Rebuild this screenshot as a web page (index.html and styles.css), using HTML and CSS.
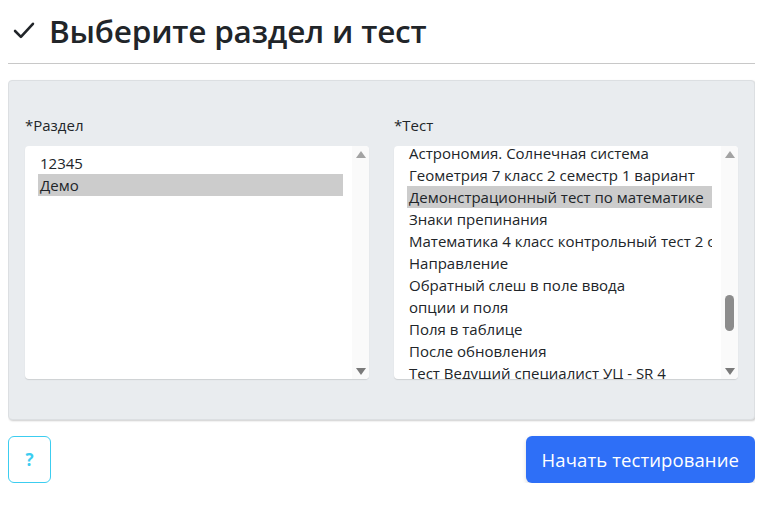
FILE: index.html
```html
<!DOCTYPE html>
<html lang="ru">
<head>
  <meta charset="UTF-8" />
  <meta name="viewport" content="width=device-width, initial-scale=1.0"/>
  <title>Выберите раздел и тест</title>
  <link rel="stylesheet" href="styles.css">
</head>
<body>
  <h2 class="page-title">
    <svg class="check" width="26" height="26" viewBox="0 0 16 16"><path d="M2.5 8.6l3.6 3.6 7.4-8" fill="none" stroke="#212529" stroke-width="1.6" stroke-linecap="round" stroke-linejoin="round"/></svg>
    Выберите раздел и тест
  </h2>
  <hr class="divider">

  <div class="panel">
    <div class="field">
      <label class="field-label">*Раздел</label>
      <div class="listbox">
        <ul class="options">
          <li>12345</li>
          <li class="selected">Демо</li>
        </ul>
        <div class="scrollbar">
          <span class="arrow up"></span>
          <span class="track"></span>
          <span class="arrow down"></span>
        </div>
      </div>
    </div>
    <div class="field">
      <label class="field-label">*Тест</label>
      <div class="listbox">
        <ul class="options scrolled">
          <li>Астрономия. Солнечная система</li>
          <li>Геометрия 7 класс 2 семестр 1 вариант</li>
          <li class="selected">Демонстрационный тест по математике</li>
          <li>Знаки препинания</li>
          <li>Математика 4 класс контрольный тест 2 семестр</li>
          <li>Направление</li>
          <li>Обратный слеш в поле ввода</li>
          <li>опции и поля</li>
          <li>Поля в таблице</li>
          <li>После обновления</li>
          <li>Тест Ведущий специалист УЦ - SR 4</li>
        </ul>
        <div class="scrollbar">
          <span class="arrow up"></span>
          <span class="track"><span class="thumb"></span></span>
          <span class="arrow down"></span>
        </div>
      </div>
    </div>
  </div>

  <div class="actions">
    <button class="help-btn">?</button>
    <button class="start-btn">Начать тестирование</button>
  </div>
</body>
</html>
```

FILE: styles.css
```css
* {
  margin: 0;
  padding: 0;
  box-sizing: border-box;
}

body {
  margin: 8px;
  font-family: 'Open Sans', 'Noto Sans', sans-serif;
  color: #212529;
  background: #fff;
}

.page-title {
  display: flex;
  align-items: center;
  gap: 12px;
  height: 44px;
  padding-left: 3px;
  font-size: 31.5px;
  font-weight: 600;
  letter-spacing: -0.2px;
}

.check {
  flex: none;
}

.divider {
  border: none;
  border-top: 1px solid #c8c8c8;
  margin: 11px 0 16px;
}

.panel {
  display: grid;
  grid-template-columns: 344px 344px;
  column-gap: 25px;
  height: 340px;
  padding: 34px 16px 0 16px;
  background: #e9ecef;
  border: 1px solid #dcdfe2;
  border-radius: 4px;
  box-shadow: 1px 1px 2px rgba(0, 0, 0, 0.2);
}

.field-label {
  display: block;
  font-size: 15px;
  line-height: 20px;
  margin-bottom: 11px;
}

.listbox {
  display: flex;
  height: 233px;
  background: #fff;
  border-radius: 4px;
  box-shadow: 0 1px 1px rgba(0, 0, 0, 0.12);
  overflow: hidden;
}

.options {
  flex: 1;
  list-style: none;
  padding: 6px 9px 0 13px;
  font-size: 15px;
  line-height: 22px;
  white-space: nowrap;
  overflow: hidden;
}

.options.scrolled li:first-child {
  margin-top: -10px;
}

.options li {
  padding-left: 2px;
  overflow: hidden;
}

.options li.selected {
  background: #cccccc;
}

.scrollbar {
  flex: none;
  width: 17px;
  display: flex;
  flex-direction: column;
  align-items: center;
  background: #fafafa;
  padding: 5px 0 4px;
}

.arrow {
  width: 0;
  height: 0;
  border-left: 5px solid transparent;
  border-right: 5px solid transparent;
}

.arrow.up {
  border-bottom: 7px solid #a3a3a3;
}

.arrow.down {
  border-top: 7px solid #7a7a7a;
}

.track {
  flex: 1;
  width: 100%;
  display: flex;
  justify-content: center;
  padding-top: 137px;
}

.thumb {
  width: 9px;
  height: 36px;
  border-radius: 5px;
  background: #8c8c8c;
}

.actions {
  display: flex;
  justify-content: space-between;
  margin-top: 16px;
}

.help-btn {
  width: 43px;
  height: 47px;
  background: #fff;
  border: 1px solid #3ccdf0;
  border-radius: 6px;
  color: #3ccdf0;
  font-family: inherit;
  font-size: 17px;
  font-weight: 700;
}

.start-btn {
  height: 47px;
  padding: 0 16px;
  background: #2e6ff7;
  border: none;
  border-radius: 6px;
  color: #fff;
  font-family: inherit;
  font-size: 18.5px;
  letter-spacing: 0.1px;
  box-shadow: 0 2px 4px rgba(0, 0, 0, 0.15);
}
```
